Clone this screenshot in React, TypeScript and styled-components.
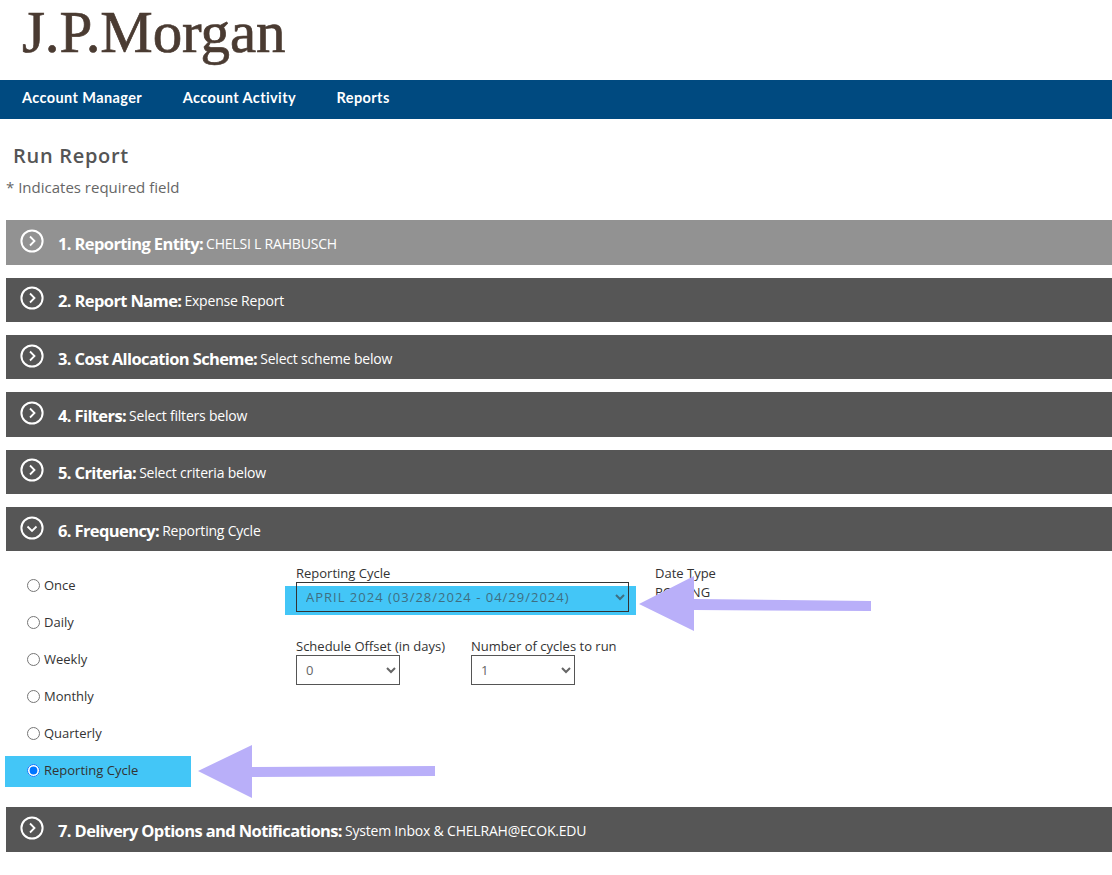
import styled, { createGlobalStyle } from "styled-components";

const GlobalStyle = createGlobalStyle`
  html, body {
    margin: 0;
    padding: 0;
    background: #fff;
    overflow: hidden;
    font-family: "Open Sans", "Liberation Sans", sans-serif;
  }
`;

const Header = styled.header`
  height: 80px;
  padding-left: 22px;
  box-sizing: border-box;
`;

const Logo = styled.div`
  font-family: "Liberation Serif", serif;
  font-size: 59px;
  line-height: 64px;
  letter-spacing: -0.1px;
  color: #4a3b32;
  -webkit-text-stroke: 0.7px #4a3b32;
`;

const Nav = styled.nav`
  height: 39px;
  box-sizing: border-box;
  padding: 0 0 4px 22px;
  background: #004a80;
  display: flex;
  align-items: center;
  gap: 40.5px;
`;

const NavItem = styled.a`
  font-family: Lato, sans-serif;
  font-size: 14.5px;
  font-weight: 700;
  letter-spacing: 0.4px;
  color: #fff;
`;

const Main = styled.main`
  padding: 23px 0 0 6px;
`;

const Title = styled.h1`
  margin: 0 0 0 7px;
  font-size: 20px;
  line-height: 27px;
  font-weight: 600;
  letter-spacing: 0.7px;
  color: #555;
`;

const Required = styled.p`
  margin: 8px 0 23.4px;
  font-size: 15px;
  line-height: 20px;
  color: #666;
`;

const Bar = styled.div<{ $muted?: boolean }>`
  height: 44.5px;
  margin-bottom: 12.8px;
  background: ${({ $muted }) => ($muted ? "#929292" : "#565656")};
  display: flex;
  align-items: center;
  padding-left: 14px;
  color: #fff;
  white-space: nowrap;
`;

const BarIcon = styled.svg`
  width: 24px;
  height: 24px;
  margin: -3px 14px 0 0;
  flex: none;
`;

const BarTitle = styled.b`
  font-size: 16.5px;
  font-weight: 700;
  letter-spacing: -0.62px;
  margin: 2px 3px 0 0;
`;

const BarValue = styled.span`
  font-size: 14px;
  letter-spacing: -0.2px;
  margin-top: 2px;
`;

const SectionBody = styled.div`
  position: relative;
  height: 243.1px;
  margin-top: -12.8px;
  margin-bottom: 12.8px;
  display: grid;
  grid-template-columns: 290px 1fr;
`;

const RadioList = styled.div`
  display: flex;
  flex-direction: column;
  padding-top: 18.1px;
`;

const RadioRow = styled.label<{ $marked?: boolean }>`
  height: 31px;
  margin: ${({ $marked }) => ($marked ? "2px" : "0")} 0 6px -1px;
  width: 186px;
  padding: 0 0 ${({ $marked }) => ($marked ? "4px" : "0")} 22px;
  box-sizing: border-box;
  display: flex;
  align-items: center;
  gap: 4px;
  font-size: 13px;
  color: #333;
  background: ${({ $marked }) => ($marked ? "#43c6f7" : "transparent")};
`;

const Radio = styled.input`
  width: 13px;
  height: 13px;
  margin: 2px 0 0;
`;

const Form = styled.div`
  display: flex;
  flex-direction: column;
  gap: 26px;
  padding-top: 13.6px;
`;

const FormRow = styled.div`
  display: flex;
  gap: 26px;
`;

const Field = styled.div`
  display: flex;
  flex-direction: column;
`;

const FieldLabel = styled.span`
  font-size: 13px;
  line-height: 17px;
  color: #333;
`;

const StaticValue = styled.span`
  font-size: 13px;
  line-height: 18px;
  margin-top: 1px;
  color: #333;
`;

const Marked = styled.div`
  position: relative;
  &::before {
    content: "";
    position: absolute;
    left: -11px;
    top: 4px;
    width: 351px;
    height: 29px;
    background: #43c6f7;
  }
`;

const Select = styled.select<{ $width: number }>`
  position: relative;
  display: block;
  width: ${({ $width }) => $width}px;
  height: 30px;
  padding: 0 5px;
  border: 1px solid #555;
  border-radius: 0;
  background: transparent;
  font-family: "Open Sans", sans-serif;
  font-size: 13px;
  color: #666;
`;

const WideSelect = styled(Select)`
  letter-spacing: 1px;
  color: #3f6f82;
  border-color: #333;
`;

const Arrow = styled.svg`
  position: absolute;
  left: 0;
  top: 0;
  width: 1112px;
  height: 875px;
  pointer-events: none;
`;

const Chevron = ({ open }: { open?: boolean }) => (
  <BarIcon viewBox="0 0 24 24" fill="none" stroke="#fff">
    <circle cx="12" cy="12" r="10.6" strokeWidth="2" />
    <path d={open ? "M7.5 10.5 12 15l4.5-4.5" : "M10 7.5 14.5 12 10 16.5"} strokeWidth="1.8" />
  </BarIcon>
);

const sectionsBefore = [
  { title: "1. Reporting Entity:", value: "CHELSI L RAHBUSCH", muted: true },
  { title: "2. Report Name:", value: "Expense Report" },
  { title: "3. Cost Allocation Scheme:", value: "Select scheme below" },
  { title: "4. Filters:", value: "Select filters below" },
  { title: "5. Criteria:", value: "Select criteria below" },
];

const frequencies = ["Once", "Daily", "Weekly", "Monthly", "Quarterly", "Reporting Cycle"];

export default function App() {
  return (
    <>
      <GlobalStyle />
      <Header>
        <Logo>J.P.Morgan</Logo>
      </Header>
      <Nav>
        <NavItem>Account Manager</NavItem>
        <NavItem>Account Activity</NavItem>
        <NavItem>Reports</NavItem>
      </Nav>
      <Main>
        <Title>Run Report</Title>
        <Required>* Indicates required field</Required>
        {sectionsBefore.map((s) => (
          <Bar key={s.title} $muted={s.muted}>
            <Chevron />
            <BarTitle>{s.title}</BarTitle>
            <BarValue>{s.value}</BarValue>
          </Bar>
        ))}
        <Bar>
          <Chevron open />
          <BarTitle>6. Frequency:</BarTitle>
          <BarValue>Reporting Cycle</BarValue>
        </Bar>
        <SectionBody>
          <RadioList>
            {frequencies.map((f) => (
              <RadioRow key={f} $marked={f === "Reporting Cycle"}>
                <Radio type="radio" name="freq" defaultChecked={f === "Reporting Cycle"} />
                {f}
              </RadioRow>
            ))}
          </RadioList>
          <Form>
            <FormRow>
              <Field>
                <FieldLabel>Reporting Cycle</FieldLabel>
                <Marked>
                  <WideSelect $width={333}>
                    <option>APRIL 2024 (03/28/2024 - 04/29/2024)</option>
                  </WideSelect>
                </Marked>
              </Field>
              <Field>
                <FieldLabel>Date Type</FieldLabel>
                <StaticValue>POSTING</StaticValue>
              </Field>
            </FormRow>
            <FormRow>
              <Field>
                <FieldLabel>Schedule Offset (in days)</FieldLabel>
                <Select $width={104}>
                  <option>0</option>
                </Select>
              </Field>
              <Field>
                <FieldLabel>Number of cycles to run</FieldLabel>
                <Select $width={104}>
                  <option>1</option>
                </Select>
              </Field>
            </FormRow>
          </Form>
        </SectionBody>
        <Bar>
          <Chevron />
          <BarTitle>7. Delivery Options and Notifications:</BarTitle>
          <BarValue>System Inbox &amp; CHELRAH@ECOK.EDU</BarValue>
        </Bar>
      </Main>
      <Arrow viewBox="0 0 1112 875">
        <path d="M639 604 694 576V599L871 601V611L694 610V631Z" fill="#b9aff9" />
        <path d="M198 771 252 745V767L435 766V776L252 777V798Z" fill="#b9aff9" />
      </Arrow>
    </>
  );
}
